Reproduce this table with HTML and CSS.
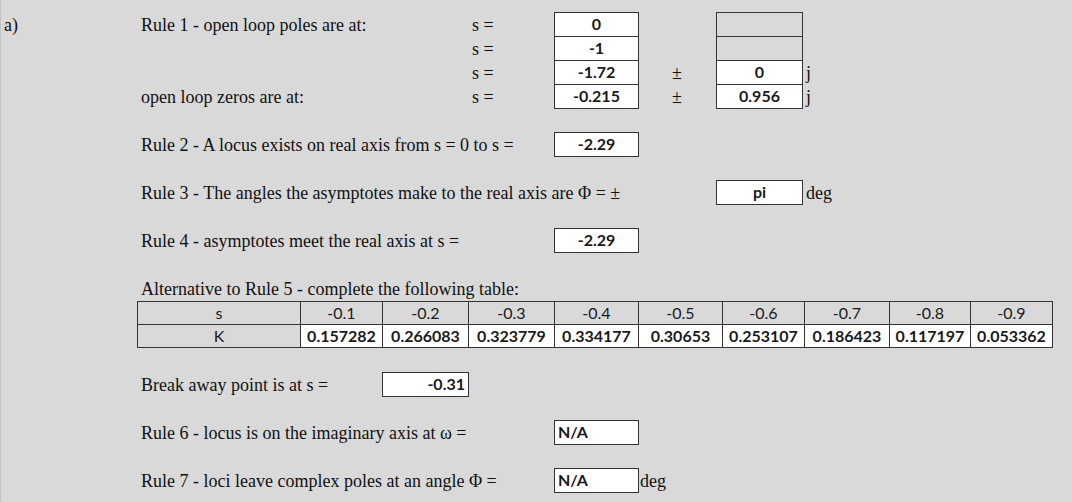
FILE: index.html
```html
<!DOCTYPE html>
<html lang="en">
<head>
    <link rel="stylesheet" href="styles.css">
    <title>Root Locus Rules</title>
</head>
<body>
    <div class="sheet">
        <div class="row">
            <div class="c1 txt">a)</div>
            <div class="c2 txt">Rule 1 - open loop poles are at:</div>
            <div class="c5 txt">s =</div>
            <div class="c6"><div class="box">0</div></div>
            <div class="c8"><div class="box wide empty"></div></div>
        </div>
        <div class="row">
            <div class="c5 txt">s =</div>
            <div class="c6"><div class="box">-1</div></div>
            <div class="c8"><div class="box wide empty"></div></div>
        </div>
        <div class="row">
            <div class="c5 txt">s =</div>
            <div class="c6"><div class="box">-1.72</div></div>
            <div class="c7 txt pm">±</div>
            <div class="c8"><div class="box wide">0</div></div>
            <div class="c10 txt unit">j</div>
        </div>
        <div class="row">
            <div class="c2 txt">open loop zeros are at:</div>
            <div class="c5 txt">s =</div>
            <div class="c6"><div class="box">-0.215</div></div>
            <div class="c7 txt pm">±</div>
            <div class="c8"><div class="box wide">0.956</div></div>
            <div class="c10 txt unit">j</div>
        </div>
        <div class="row"></div>

        <!-- Rule 2 -->
        <div class="row">
            <div class="c2 txt">Rule 2 - A locus exists on real axis from s = 0 to s =</div>
            <div class="c6"><div class="box">-2.29</div></div>
        </div>
        <div class="row"></div>

        <!-- Rule 3 -->
        <div class="row">
            <div class="c2 txt">Rule 3 - The angles the asymptotes make to the real axis are Φ = ±</div>
            <div class="c8"><div class="box wide">pi</div></div>
            <div class="c10 txt unit">deg</div>
        </div>
        <div class="row"></div>

        <!-- Rule 4 -->
        <div class="row">
            <div class="c2 txt">Rule 4 - asymptotes meet the real axis at s =</div>
            <div class="c6"><div class="box">-2.29</div></div>
        </div>
        <div class="row"></div>

        <!-- Rule 5 table -->
        <div class="row">
            <div class="c2 txt">Alternative to Rule 5 - complete the following table:</div>
        </div>
        <div class="row table-row">
            <table class="k-table">
                <colgroup>
                    <col style="width: 163px">
                    <col style="width: 82px">
                    <col style="width: 86px">
                    <col style="width: 86px">
                    <col style="width: 84px">
                    <col style="width: 84px">
                    <col style="width: 82px">
                    <col style="width: 85px">
                    <col style="width: 81px">
                    <col style="width: 82px">
                </colgroup>
                <tr>
                    <td>s</td>
                    <td>-0.1</td>
                    <td>-0.2</td>
                    <td>-0.3</td>
                    <td>-0.4</td>
                    <td>-0.5</td>
                    <td>-0.6</td>
                    <td>-0.7</td>
                    <td>-0.8</td>
                    <td>-0.9</td>
                </tr>
                <tr class="k-row">
                    <td>K</td>
                    <td>0.157282</td>
                    <td>0.266083</td>
                    <td>0.323779</td>
                    <td>0.334177</td>
                    <td>0.30653</td>
                    <td>0.253107</td>
                    <td>0.186423</td>
                    <td>0.117197</td>
                    <td>0.053362</td>
                </tr>
            </table>
        </div>
        <div class="row"></div>

        <div class="row">
            <div class="c2 txt">Break away point is at s =</div>
            <div class="c4"><div class="box wide right">-0.31</div></div>
        </div>
        <div class="row"></div>

        <!-- Rule 6 -->
        <div class="row">
            <div class="c2 txt">Rule 6 - locus is on the imaginary axis at ω =</div>
            <div class="c6"><div class="box left">N/A</div></div>
        </div>
        <div class="row"></div>

        <!-- Rule 7 -->
        <div class="row">
            <div class="c2 txt">Rule 7 - loci leave complex poles at an angle Φ =</div>
            <div class="c6"><div class="box left">N/A</div></div>
            <div class="c7 txt unit">deg</div>
        </div>
    </div>
</body>
</html>
```

FILE: styles.css
```css
html, body {
    margin: 0;
    height: 100%;
    background-color: #d9d9d9;
}

body {
    border-left: 1px solid #c4c4c4;
    box-sizing: border-box;
    overflow: hidden;
}

.sheet {
    padding-top: 12px;
    margin-left: -1px;
    font-family: "Liberation Serif", "Times New Roman", serif;
    font-size: 18px;
    color: #111;
}

.row {
    display: grid;
    grid-template-columns: 137px 163px 82px 86px 86px 84px 78px 6px 82px 85px 81px 82px 1fr;
    height: 24px;
    line-height: 24px;
}

.txt {
    white-space: nowrap;
    padding-left: 4px;
    padding-top: 1px;
}

.c1 { grid-column: 1; }
.c2 { grid-column: 2; }
.c4 { grid-column: 4; }
.c5 { grid-column: 5; }
.c6 { grid-column: 6; }
.c7 { grid-column: 7; }
.c8 { grid-column: 8 / 10; }
.c10 { grid-column: 10; }

.pm {
    padding-left: 0;
    text-align: center;
}

.unit {
    padding-left: 2px;
}

.box {
    width: 85px;
    height: 25px;
    box-sizing: border-box;
    border: 1px solid #333;
    background-color: #fff;
    font-family: Lato, "Liberation Sans", sans-serif;
    font-weight: bold;
    font-size: 16px;
    line-height: 22px;
    text-align: center;
    color: #1a1a1a;
}

.box.wide {
    width: 87px;
}

.box.empty {
    background-color: transparent;
}

.box.right {
    text-align: right;
    padding-right: 3px;
}

.box.left {
    text-align: left;
    padding-left: 3px;
}

.table-row {
    height: 48px;
}

.k-table {
    grid-column: 2 / 13;
    margin-top: 1px;
    width: 915px;
    table-layout: fixed;
    border-collapse: collapse;
    font-family: Lato, "Liberation Sans", sans-serif;
    font-size: 16px;
    color: #1a1a1a;
}

.k-table td {
    border: 1px solid #333;
    height: 22px;
    padding: 0;
    line-height: 22px;
    text-align: center;
}

.k-row td {
    background-color: #fff;
    font-weight: bold;
}

.k-row td:first-child {
    background-color: transparent;
    font-weight: normal;
}
```
